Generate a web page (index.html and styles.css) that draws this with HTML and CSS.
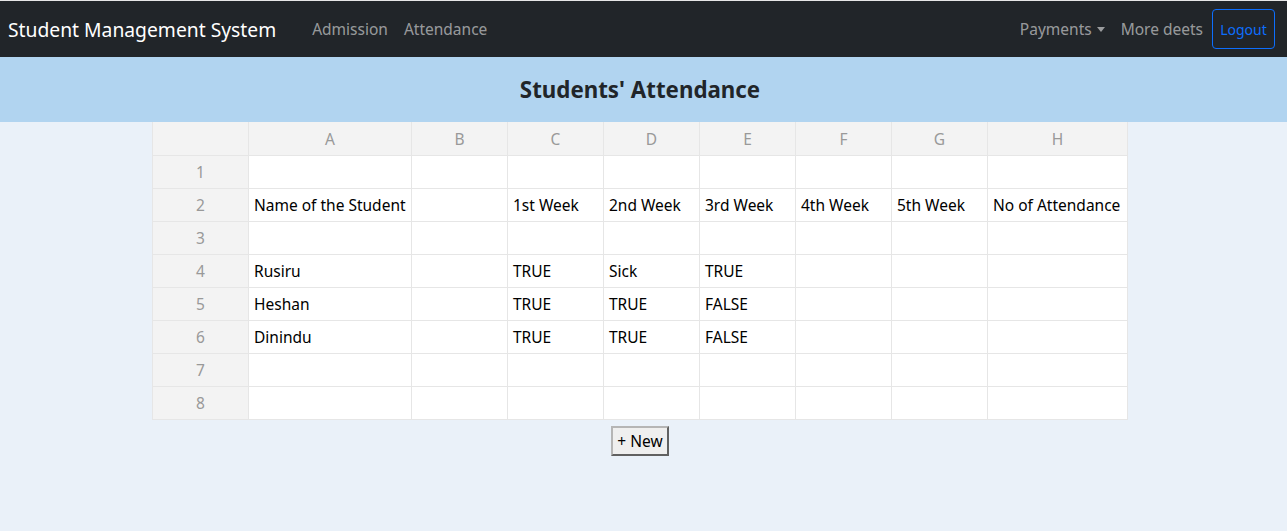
FILE: index.html
```html
<!DOCTYPE html>
<html>
<head>
<meta charset="utf-8">
<link rel="stylesheet" href="styles.css">
</head>
<body>
<nav class="navbar">
  <div class="nav-left">
    <span class="brand">Student Management System</span>
    <a class="nav-link">Admission</a>
    <a class="nav-link">Attendance</a>
  </div>
  <div class="nav-right">
    <a class="nav-link dropdown">Payments<span class="caret"></span></a>
    <a class="nav-link">More deets</a>
    <button class="btn-logout">Logout</button>
  </div>
</nav>
<header class="banner"><h1>Students' Attendance</h1></header>
<main class="main">
  <table class="sheet">
    <colgroup>
      <col class="c-idx"><col class="c-a"><col class="c-n"><col class="c-n"><col class="c-n"><col class="c-n"><col class="c-n"><col class="c-n"><col class="c-h">
    </colgroup>
    <thead>
      <tr><th></th><th>A</th><th>B</th><th>C</th><th>D</th><th>E</th><th>F</th><th>G</th><th>H</th></tr>
    </thead>
    <tbody>
      <tr><td class="idx">1</td><td></td><td></td><td></td><td></td><td></td><td></td><td></td><td></td></tr>
      <tr><td class="idx">2</td><td>Name of the Student</td><td></td><td>1st Week</td><td>2nd Week</td><td>3rd Week</td><td>4th Week</td><td>5th Week</td><td>No of Attendance</td></tr>
      <tr><td class="idx">3</td><td></td><td></td><td></td><td></td><td></td><td></td><td></td><td></td></tr>
      <tr><td class="idx">4</td><td>Rusiru</td><td></td><td>TRUE</td><td>Sick</td><td>TRUE</td><td></td><td></td><td></td></tr>
      <tr><td class="idx">5</td><td>Heshan</td><td></td><td>TRUE</td><td>TRUE</td><td>FALSE</td><td></td><td></td><td></td></tr>
      <tr><td class="idx">6</td><td>Dinindu</td><td></td><td>TRUE</td><td>TRUE</td><td>FALSE</td><td></td><td></td><td></td></tr>
      <tr><td class="idx">7</td><td></td><td></td><td></td><td></td><td></td><td></td><td></td><td></td></tr>
      <tr><td class="idx">8</td><td></td><td></td><td></td><td></td><td></td><td></td><td></td><td></td></tr>
    </tbody>
  </table>
  <button class="btn-new">+ New</button>
</main>
</body>
</html>
```

FILE: styles.css
```css
html, body {
  margin: 0;
  padding: 0;
}
body {
  background: #eaf1f9;
  font-family: "Noto Sans", "DejaVu Sans", sans-serif;
  color: #212529;
  min-height: 531px;
}
.navbar {
  height: 56px;
  background: #212529;
  border-top: 1px solid #e6e6e6;
  display: flex;
  align-items: center;
  justify-content: space-between;
  padding: 0 12px 0 8px;
}
.nav-left, .nav-right {
  display: flex;
  align-items: center;
}
.brand {
  color: #fff;
  font-size: 19.3px;
  margin-right: 28px;
}
.nav-link {
  color: rgba(255,255,255,0.55);
  font-size: 15.5px;
  padding: 8px;
}
.caret {
  display: inline-block;
  margin-left: 5px;
  vertical-align: 3px;
  border-top: 5px solid rgba(255,255,255,0.55);
  border-left: 4px solid transparent;
  border-right: 4px solid transparent;
}
.btn-logout {
  margin-left: 1px;
  height: 40px;
  width: 63px;
  background: transparent;
  border: 1px solid #0d6efd;
  border-radius: 4px;
  color: #0d6efd;
  font-family: inherit;
  font-size: 14px;
  padding: 0;
}
.banner {
  height: 65px;
  background: #b1d4f0;
  display: flex;
  align-items: center;
  justify-content: flex-start;
}
.banner h1 {
  margin: 0;
  font-size: 22.3px;
  font-weight: 700;
  width: 1280px;
  text-align: center;
}
.main {
  width: 1280px;
  display: flex;
  flex-direction: column;
  align-items: center;
}
.sheet {
  border-collapse: collapse;
  table-layout: fixed;
  background: #fff;
  font-size: 15.5px;
  color: #000;
  border-left: 1px solid #e6e6e6;
}
.c-idx { width: 96px; }
.c-a { width: 163px; }
.c-n { width: 96px; }
.c-h { width: 140px; }
.sheet th, .sheet td {
  height: 32px;
  padding: 0 5px;
  border: 1px solid #e6e6e6;
  white-space: nowrap;
  overflow: hidden;
  text-align: left;
  font-weight: 400;
}
.sheet thead th {
  height: 33px;
  background: #f3f3f3;
  color: #999;
  text-align: center;
  border-top: none;
}
.sheet td.idx {
  background: #f3f3f3;
  color: #999;
  text-align: center;
}
.btn-new {
  margin-top: 6px;
  height: 30px;
  font-family: inherit;
  font-size: 15.5px;
  background: #efefef;
  border: 2px outset #b5b5b5;
  color: #000;
  padding: 0 4px;
}
```
